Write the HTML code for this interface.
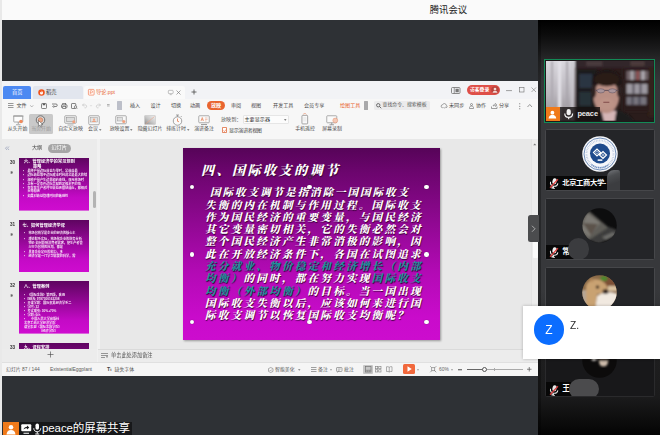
<!DOCTYPE html>
<html lang="zh-CN">
<head>
<meta charset="utf-8">
<title>腾讯会议</title>
<style>
*{box-sizing:border-box;margin:0;padding:0}
html,body{width:660px;height:435px;overflow:hidden;background:#2e3135}
body{position:relative;font-family:"Liberation Sans","Noto Sans CJK SC",sans-serif;color:#333}
.abs{position:absolute}
.t{position:absolute;white-space:nowrap;line-height:1}
svg{position:absolute;overflow:visible}
/* top title bar */
#titlebar{left:0;top:0;width:660px;height:19.5px;background:#fafafa}
#titlebar .t{left:429.7px;top:5.4px;font-size:9.4px;color:#222}
#leftedge{left:0;top:0;width:2px;height:435px;background:#e9e9e9}
/* main dark */
#stage{left:2px;top:20px;width:536px;height:415px;background:#2e3135}
/* wps window: inner uses page coordinates */
#wps{left:2px;top:81px;width:536px;height:295px;background:#f6f6f6;overflow:hidden}
#wpsin{position:absolute;left:-2px;top:-81px;width:660px;height:435px;filter:blur(.35px)}
#tabrow{left:0;top:81px;width:540px;height:18px;background:#f2f3f6}
#menurow{left:0;top:99px;width:540px;height:40px;background:#f7f7f7}
#workarea{left:97px;top:139px;width:443px;height:210px;background:#e8e8e8}
#thumbpane{left:0;top:139px;width:100px;height:223px;background:#ebebeb;border-right:3px solid #f1f1f1}
#notes{left:98px;top:349px;width:442px;height:13px;background:#ececec;border-top:1px solid #dadada}
#status{left:0;top:362px;width:540px;height:14px;background:#f5f5f5;border-top:1px solid #e0e0e0}
.m{position:absolute;white-space:nowrap;line-height:1;font-size:5.1px;color:#4a4a4a;top:103px}
.r{position:absolute;white-space:nowrap;line-height:1;font-size:4.95px;color:#4a4a4a;top:127.4px;text-align:center;transform:translateX(-50%)}
.s{position:absolute;white-space:nowrap;line-height:1;font-size:4.9px;color:#5a5a5a;top:367.6px}
.thumb{position:absolute;left:19.4px;width:69.6px;height:52.6px;background:linear-gradient(#5e0560 0,#8d078f 35%,#c40ac6 75%,#cf0cd0 100%) 0 0/100% 52.6px no-repeat;overflow:hidden}
.thumb b{position:absolute;font-weight:bold;font-size:4.1px;line-height:1;color:#fff;white-space:nowrap;letter-spacing:.15px}
.thumb u{position:absolute;text-decoration:none;font-weight:bold;font-size:3.15px;line-height:1;color:#f7e3f7;white-space:nowrap}
.thumb i{position:absolute;left:6px;height:1.5px;background:#f6dcf6;opacity:.8;border-radius:1px}
.num{position:absolute;left:10px;font-size:4.6px;line-height:1;color:#333;font-weight:bold}
.star{position:absolute;left:9.5px;font-size:4px;line-height:1;color:#666}
/* slide */
#slide{left:183px;top:147.7px;width:257px;height:192.8px;background:linear-gradient(#560458 0,#6b056d 12%,#8f0891 38%,#b30ab5 65%,#c90bcb 88%,#cc0cce 100%);box-shadow:1px 1px 2px rgba(0,0,0,.35)}
#stitle{left:18px;top:12px;font:900 13.2px "Liberation Serif","Noto Serif CJK SC",serif;color:#fff;letter-spacing:2.3px;font-style:italic;text-shadow:.6px .8px 1px rgba(40,0,40,.9)}
#sbody{left:22px;top:39.5px;width:222px;font:900 10.6px/12.32px "Liberation Serif","Noto Serif CJK SC",serif;color:#fff;letter-spacing:2.22px;font-style:italic;text-shadow:.5px .7px .8px rgba(40,0,40,.9);white-space:nowrap;position:absolute}
#sbody span{color:#1f8f9b}
#sbody em{font-style:italic;letter-spacing:1.9px;padding-left:5px}
.hd{position:absolute;margin:-.4px;width:4.4px;height:4.4px;border-radius:50%;background:#fff;box-shadow:0 0 1px rgba(0,0,0,.6)}
/* right panel */
#side{left:538px;top:20px;width:122px;height:415px;background:linear-gradient(#000 0,#0b0b0b 14px,#1a1a1b 28px,#2a2b2c 42px,#353639 62px,#37383b 90px,#37383b 270px,#2c2d2f 310px,#1e1e1f 338px,#1b1b1c 377px,#0d0d0d 400px,#040404 415px)}
#sidestrip{left:538px;top:20px;width:2.500px;height:415px;background:rgba(0,0,0,.28)}
.tile{position:absolute;left:544.700px;width:110.800px;height:62px;background:#242528;border:1px solid #46474a;border-radius:1.500px;overflow:hidden}
.nm{position:absolute;left:0;bottom:0;height:14px;background:rgba(0,0,0,.78);color:#fff;font-size:8.6px;line-height:14px;white-space:nowrap;padding-left:15px}
.blob{position:absolute;background:#555658;border-radius:9px;filter:blur(.6px)}
.av{position:absolute;left:37px;top:8px;width:36px;height:36px;border-radius:50%;overflow:hidden}
</style>
</head>
<body>
<div id="stage" class="abs"></div>
<div id="titlebar" class="abs"><div class="t">腾讯会议</div></div>
<div id="leftedge" class="abs"></div>

<!-- WPS window -->
<div id="wps" class="abs"><div id="wpsin">
  <div id="tabrow" class="abs"></div>
  <div id="menurow" class="abs"></div>

  <!-- tabs -->
  <div class="abs" style="left:3px;top:86px;width:28px;height:12.5px;background:#4c89f2;border-radius:2px 2px 0 0"></div>
  <div class="t" style="left:12px;top:89.6px;font-size:5.2px;color:#fff">首页</div>
  <div class="abs" style="left:32.5px;top:86px;width:50px;height:12.5px;background:#e2e6ee;border-radius:2px 2px 0 0"></div>
  <svg style="left:37.5px;top:88.5px" width="7" height="7" viewBox="0 0 14 14"><circle cx="7" cy="7" r="6.5" fill="#f0541c"/><path d="M7 3c2 2 3 3.5 3 5a3 3 0 0 1-6 0c0-1 .6-1.8 1.4-2.4C5.6 6.600 6.300 7 6.800 6.800 7.600 6 7.400 4.500 7 3z" fill="#fff"/></svg>
  <div class="t" style="left:46px;top:89.6px;font-size:5.2px;color:#333">稻壳</div>
  <div class="abs" style="left:84px;top:86px;width:101px;height:13px;background:#fafafa;border-radius:2px 2px 0 0"></div>
  <svg style="left:88px;top:88.600px" width="6.500" height="6.500" viewBox="0 0 13 13"><rect x=".8" y=".8" width="11.400" height="11.400" rx="1.500" fill="#fffaf7" stroke="#f0683a" stroke-width="1.200"/><path d="M4.500 10V3.500h2.700a2 2 0 0 1 0 4H4.500" fill="none" stroke="#f0683a" stroke-width="1"/></svg>
  <div class="t" style="left:96px;top:89.6px;font-size:5.2px;color:#e8622c">导论.ppt</div>
  <svg style="left:167.500px;top:89.500px" width="5.500" height="5" viewBox="0 0 11 10"><rect x=".7" y=".7" width="9.600" height="6.600" rx="1.500" fill="none" stroke="#999" stroke-width="1.200"/><path d="M3.500 9.300h4" stroke="#999" stroke-width="1.200"/></svg>
  <svg style="left:176px;top:89.500px" width="5" height="5" viewBox="0 0 10 10"><path d="M1 1l8 8M9 1l-8 8" stroke="#777" stroke-width="1.300"/></svg>
  <svg style="left:191px;top:89px" width="6" height="6" viewBox="0 0 12 12"><path d="M6 1v10M1 6h10" stroke="#4a4a4a" stroke-width="1.600"/></svg>

  <!-- window controls -->
  <svg style="left:451px;top:86.500px" width="9.500" height="7" viewBox="0 0 19 14"><rect x="1" y="1" width="17" height="12" rx="2" fill="none" stroke="#6e6e6e" stroke-width="1.600"/><rect x="9" y="3.500" width="6.500" height="7" fill="#777"/><path d="M6.500 1.500v11" stroke="#6e6e6e" stroke-width="1.400"/></svg>
  <div class="abs" style="left:467px;top:85px;width:32.500px;height:10px;border-radius:5px;background:#de4f48"></div>
  <div class="t" style="left:470px;top:87.600px;font-size:4.8px;color:#fff;font-weight:bold">访客登录</div>
  <svg style="left:490.500px;top:86px" width="8" height="8" viewBox="0 0 16 16"><circle cx="8" cy="8" r="7.500" fill="#b8433c"/><circle cx="8" cy="6" r="2.700" fill="#f3d9d6"/><path d="M3 13.500c.5-3 2.500-4.200 5-4.200s4.500 1.200 5 4.200z" fill="#f3d9d6"/></svg>
  <svg style="left:506px;top:90px" width="6" height="1.200" viewBox="0 0 12 2.400"><path d="M0 1.200h12" stroke="#808080" stroke-width="1.500"/></svg>
  <svg style="left:518.500px;top:87.300px" width="5.500" height="5.500" viewBox="0 0 11 11"><rect x="1" y="1" width="9" height="9" fill="none" stroke="#777" stroke-width="1.300"/></svg>
  <svg style="left:530.500px;top:87.300px" width="5.500" height="5.500" viewBox="0 0 11 11"><path d="M1 1l9 9M10 1l-9 9" stroke="#777" stroke-width="1.200"/></svg>

  <!-- menu row -->
  <svg style="left:8px;top:103px" width="5.500" height="5" viewBox="0 0 11 10"><path d="M0 1h11M0 5h11M0 9h11" stroke="#6e6e6e" stroke-width="1.400"/></svg>
  <div class="m" style="left:16.500px">文件</div>
  <svg style="left:29.500px;top:104.500px" width="3.500" height="2.500" viewBox="0 0 7 5"><path d="M.5.500l3 3.500 3-3.500" fill="none" stroke="#888" stroke-width="1.100"/></svg>
  <svg style="left:41px;top:102.500px" width="6" height="6" viewBox="0 0 12 12"><rect x="1" y="1" width="10" height="10" rx="1.500" fill="none" stroke="#5c5c5c" stroke-width="1.500"/><rect x="3.500" y="1" width="5" height="3.500" fill="#5c5c5c"/></svg>
  <svg style="left:51px;top:102.500px" width="6.500" height="6" viewBox="0 0 13 12"><path d="M2 2h8a2.500 2.500 0 0 1 0 5H5M6 4.500L3.500 7 6 9.500M3 11" fill="none" stroke="#5c5c5c" stroke-width="1.500"/></svg>
  <svg style="left:61px;top:102.500px" width="6.500" height="6" viewBox="0 0 13 12"><rect x="1" y="3.500" width="11" height="6" rx="1.200" fill="none" stroke="#5c5c5c" stroke-width="1.500"/><rect x="3.500" y=".8" width="6" height="3" fill="#f7f7f7" stroke="#5c5c5c" stroke-width="1.300"/><rect x="3.500" y="7" width="6" height="4" fill="#f7f7f7" stroke="#5c5c5c" stroke-width="1.300"/></svg>
  <svg style="left:70.500px;top:102.500px" width="6.500" height="6" viewBox="0 0 13 12"><rect x="1" y="1" width="8.500" height="10" rx="1.200" fill="none" stroke="#5c5c5c" stroke-width="1.500"/><circle cx="9" cy="8" r="2.500" fill="#f7f7f7" stroke="#5c5c5c" stroke-width="1.300"/><path d="M11 10l1.500 1.500" stroke="#5c5c5c" stroke-width="1.300"/></svg>
  <svg style="left:82px;top:103px" width="6" height="5" viewBox="0 0 12 10"><path d="M4 1L1 4l3 3M1 4h6.500a3 3 0 0 1 0 5.500H5" fill="none" stroke="#c4c4c4" stroke-width="1.400"/></svg>
  <svg style="left:89.500px;top:105px" width="2" height="1.500" viewBox="0 0 4 3"><path d="M0 0l2 2.500L4 0" fill="none" stroke="#ccc" stroke-width="1"/></svg>
  <svg style="left:94.500px;top:103px" width="6" height="5" viewBox="0 0 12 10"><path d="M8 1l3 3-3 3M11 4H4.500a3 3 0 0 0 0 5.500H7" fill="none" stroke="#c4c4c4" stroke-width="1.400"/></svg>
  <svg style="left:107px;top:104.200px" width="2.600" height="2.600" viewBox="0 0 6 6"><path d="M0 1.200h6M0 4.500h6" stroke="#7a7a7a" stroke-width="1.300"/></svg>
  <div class="abs" style="left:116.800px;top:101px;width:4.800px;height:8.500px;background:#bcbfc9;border-radius:.5px"></div>
  <div class="m" style="left:130px">插入</div>
  <div class="m" style="left:150.500px">设计</div>
  <div class="m" style="left:171px">切换</div>
  <div class="m" style="left:190px">动画</div>
  <div class="abs" style="left:207px;top:100.800px;width:18px;height:9.400px;border-radius:4.700px;background:#e9652f"></div>
  <div class="m" style="left:211px;color:#fff;font-weight:bold">放映</div>
  <div class="m" style="left:231px">审阅</div>
  <div class="m" style="left:251px">视图</div>
  <div class="m" style="left:273px">开发工具</div>
  <div class="m" style="left:304px">会员专享</div>
  <div class="m" style="left:340px;color:#e8622c">绘图工具</div>
  <div class="abs" style="left:363.500px;top:101px;width:4.500px;height:9px;background:#a9a9ab;border-radius:.5px"></div>
  <div class="abs" style="left:373.500px;top:100.800px;width:56px;height:9.400px;background:#ebebec;border-radius:1.500px"></div>
  <svg style="left:376px;top:102.800px" width="5.500" height="5.500" viewBox="0 0 11 11"><circle cx="4.500" cy="4.500" r="3.400" fill="none" stroke="#4a4a4a" stroke-width="1.500"/><path d="M7 7l3.500 3.500" stroke="#4a4a4a" stroke-width="1.600"/></svg>
  <div class="m" style="left:382.500px;font-size:4.900px;color:#555;top:103.100px">查找命令、搜索模板</div>
  <svg style="left:441px;top:102.800px" width="6.500" height="5.500" viewBox="0 0 13 11"><path d="M3.500 9.500a3 3 0 0 1-.3-6 3.800 3.800 0 0 1 7.300 1 2.600 2.600 0 0 1-.5 5" fill="none" stroke="#6e6e6e" stroke-width="1.300"/><path d="M5 8.500l2 2 3-3.500" fill="none" stroke="#6e6e6e" stroke-width="1.200"/></svg>
  <div class="m" style="left:449px">未同步</div>
  <svg style="left:468.500px;top:102.500px" width="5.500" height="6" viewBox="0 0 11 12"><circle cx="5" cy="3" r="2" fill="none" stroke="#6e6e6e" stroke-width="1.300"/><path d="M1 11V9c0-1.800 1.800-3 4-3s4 1.200 4 3v2z" fill="none" stroke="#6e6e6e" stroke-width="1.300"/></svg>
  <div class="m" style="left:476px">协作</div>
  <svg style="left:490.500px;top:102.500px" width="6.500" height="6" viewBox="0 0 13 12"><path d="M1 7v4h11V7" fill="none" stroke="#6e6e6e" stroke-width="1.300"/><path d="M4 6c.5-2.500 2.500-3.500 5-3.500V.8L12 4 9 7V5C7 5 5.500 5 4 6z" fill="none" stroke="#6e6e6e" stroke-width="1.100"/></svg>
  <div class="m" style="left:499px">分享</div>
  <svg style="left:518.500px;top:102.500px" width="1.500" height="6.500" viewBox="0 0 3 13"><circle cx="1.500" cy="1.500" r="1.100" fill="#666"/><circle cx="1.500" cy="6.500" r="1.100" fill="#666"/><circle cx="1.500" cy="11.500" r="1.100" fill="#666"/></svg>
  <svg style="left:526.500px;top:104px" width="5.500" height="3.500" viewBox="0 0 11 7"><path d="M1 6l4.500-5L10 6" fill="none" stroke="#6e6e6e" stroke-width="1.400"/></svg>

  <!-- ribbon -->
  <div class="abs" style="left:29px;top:113.500px;width:23.500px;height:20.500px;background:#c9c9c9;border-radius:1.500px"></div>
  <!-- 1 从头开始 -->
  <svg style="left:12.500px;top:114.500px" width="10.500" height="10.500" viewBox="0 0 21 21"><rect x="1.500" y="2" width="18" height="12" rx="1" fill="#fdfdfd" stroke="#858585" stroke-width="1.400"/><path d="M0 2h21" stroke="#858585" stroke-width="1.500"/><path d="M10.500 14v4M6 19.500h9" stroke="#858585" stroke-width="1.400"/><circle cx="16" cy="13" r="3.600" fill="#f08a5c"/></svg>
  <div class="r" style="left:17.500px">从头开始</div>
  <!-- 2 当页开始 -->
  <svg style="left:35px;top:114.500px" width="11" height="11" viewBox="0 0 22 22"><circle cx="11" cy="10" r="8.500" fill="#d9d9d9" stroke="#5a5a5a" stroke-width="1.600"/><circle cx="11" cy="10" r="4.500" fill="#e9a98c" stroke="#c9724b" stroke-width="1.200"/></svg>
  <svg style="left:38.300px;top:120px" width="5.600" height="8" viewBox="0 0 12 17"><path d="M1 1v12.500l3-2.800 2.200 5 2.200-1-2.200-4.800H10.500z" fill="#fff" stroke="#4a4a4a" stroke-width="1.100" stroke-linejoin="round"/></svg>
  <div class="r" style="left:41px;color:#9a9a9a">当页开始</div>
  <!-- 3 自定义放映 -->
  <svg style="left:64px;top:114.500px" width="13" height="10.500" viewBox="0 0 26 21"><rect x="1.500" y="1.500" width="23" height="15" rx="1.500" fill="#f4f4f4" stroke="#8c8c8c" stroke-width="1.400"/><rect x="5" y="5" width="16" height="8" fill="#dcdcdc" stroke="#888" stroke-width="1"/><path d="M7 20h12" stroke="#8c8c8c" stroke-width="1.400"/><circle cx="19.500" cy="13.500" r="3" fill="#f0a17f"/></svg>
  <div class="r" style="left:70.500px">自定义放映</div>
  <!-- 4 会议 -->
  <svg style="left:88px;top:114.500px" width="12" height="10.500" viewBox="0 0 24 21"><rect x="1.500" y="1.500" width="21" height="18" rx="2" fill="#f8f8f8" stroke="#8c8c8c" stroke-width="1.400"/><rect x="5" y="5" width="14" height="9" fill="#e2e2e2" stroke="#999" stroke-width="1"/><circle cx="12" cy="9" r="2" fill="#f0a17f"/><path d="M8 14c.5-2 2-3 4-3s3.500 1 4 3z" fill="#f0a17f"/></svg>
  <div class="r" style="left:93px">会议</div>
  <svg style="left:99px;top:128.900px" width="2.500" height="2" viewBox="0 0 5 4"><path d="M0 .5h5L2.500 3.500z" fill="#666"/></svg>
  <!-- 5 放映设置 -->
  <svg style="left:115px;top:114.500px" width="12" height="10.500" viewBox="0 0 24 21"><rect x="1.500" y="1.500" width="21" height="16" rx="1.500" fill="#f8f8f8" stroke="#8c8c8c" stroke-width="1.400"/><rect x="5" y="5" width="10" height="7" fill="#e0e0e0" stroke="#999" stroke-width="1"/><circle cx="17.500" cy="13" r="3.200" fill="#f0a17f"/></svg>
  <div class="r" style="left:119.500px">放映设置</div>
  <svg style="left:130px;top:128.900px" width="2.500" height="2" viewBox="0 0 5 4"><path d="M0 .5h5L2.500 3.500z" fill="#666"/></svg>
  <!-- 6 隐藏幻灯片 -->
  <svg style="left:144px;top:114.500px" width="12" height="10.500" viewBox="0 0 24 21"><defs><linearGradient id="hg" x1="0" y1="1" x2="1" y2="0"><stop offset="0" stop-color="#8f8f8f"/><stop offset=".5" stop-color="#c9c9c9"/><stop offset="1" stop-color="#f0f0f0"/></linearGradient></defs><rect x="1.500" y="1.500" width="21" height="17" fill="url(#hg)" stroke="#b8b8b8" stroke-width="1"/><path d="M3 18L21 3" stroke="#e8a98e" stroke-width="1.300"/></svg>
  <div class="r" style="left:150px">隐藏幻灯片</div>
  <!-- 7 排练计时 -->
  <svg style="left:171.500px;top:113.500px" width="11" height="12" viewBox="0 0 22 24"><circle cx="11" cy="14" r="8.500" fill="#fafafa" stroke="#858585" stroke-width="1.500"/><path d="M8 2h6M11 2v3.500M17.500 6l1.800-1.800" stroke="#858585" stroke-width="1.500"/><path d="M11 9v5.500l3 1" fill="none" stroke="#e77a4d" stroke-width="1.600"/></svg>
  <div class="r" style="left:176px">排练计时</div>
  <svg style="left:186.500px;top:128.900px" width="2.500" height="2" viewBox="0 0 5 4"><path d="M0 .5h5L2.500 3.500z" fill="#666"/></svg>
  <!-- 8 演讲备注 -->
  <svg style="left:198px;top:115px" width="12" height="10" viewBox="0 0 24 20"><rect x="1.500" y="1.500" width="21" height="14" rx="1.500" fill="#fafafa" stroke="#8c8c8c" stroke-width="1.400"/><path d="M6 19h12" stroke="#808080" stroke-width="1.500"/><path d="M6 12l2.500-7L11 12M7 9.500h3" fill="none" stroke="#e77a4d" stroke-width="1.300"/><path d="M14 6h5M14 9h5M14 12h3" stroke="#e9a58b" stroke-width="1.200"/></svg>
  <div class="r" style="left:204px">演讲备注</div>
  <!-- 9 放映到 -->
  <div class="t" style="left:221px;top:116.800px;font-size:5.100px;color:#555">放映到：</div>
  <div class="abs" style="left:242.500px;top:114.500px;width:46px;height:9.500px;background:#fcfcfc;border:.5px solid #e6e6e6;border-radius:1px"></div>
  <div class="t" style="left:244.500px;top:116.800px;font-size:5.100px;color:#333">主要显示器</div>
  <svg style="left:283.500px;top:118.500px" width="2.500" height="2" viewBox="0 0 5 4"><path d="M0 .5h5L2.500 3.500z" fill="#555"/></svg>
  <div class="abs" style="left:221.500px;top:127.300px;width:5.500px;height:5.500px;background:#fff;border:.7px solid #e58a66;border-radius:.8px"></div>
  <svg style="left:222.500px;top:128.500px" width="3.600" height="3" viewBox="0 0 7 6"><path d="M.8 3l2 2.200L6.300.8" fill="none" stroke="#e0673a" stroke-width="1.200"/></svg>
  <div class="t" style="left:229px;top:127.600px;font-size:5.100px;color:#444;letter-spacing:-.45px">显示演讲者视图</div>
  <!-- 11 手机遥控 -->
  <svg style="left:301.200px;top:113px" width="7.600" height="11.400" viewBox="0 0 16 24"><rect x="2" y="5" width="12" height="18" rx="1.500" fill="#fafafa" stroke="#858585" stroke-width="1.500"/><path d="M4.500 3c1-1.400 2.200-2 3.500-2s2.500.6 3.500 2" fill="none" stroke="#e9906b" stroke-width="1.400"/><rect x="4.500" y="8" width="7" height="10" fill="#eee"/></svg>
  <div class="r" style="left:305px">手机遥控</div>
  <!-- 12 屏幕录制 -->
  <svg style="left:326px;top:114.500px" width="12.500" height="10.500" viewBox="0 0 25 21"><rect x="1.500" y="1.500" width="20" height="14" rx="1.500" fill="#fafafa" stroke="#8c8c8c" stroke-width="1.400"/><path d="M7 19.500h9M11.500 15.500v4" stroke="#808080" stroke-width="1.500"/><circle cx="18.500" cy="11" r="4.800" fill="#f3c9b6" stroke="#e58f6d" stroke-width="1"/></svg>
  <div class="r" style="left:332px">屏幕录制</div>

  <!-- work area -->
  <div id="workarea" class="abs"></div>
  <div id="thumbpane" class="abs"></div>
  <svg style="left:4.500px;top:145.500px" width="4.500" height="4.500" viewBox="0 0 9 9"><path d="M4 1L1 4.500 4 8M8 1L5 4.500 8 8" fill="none" stroke="#7a86a8" stroke-width="1.100"/></svg>
  <div class="t" style="left:32px;top:145.400px;font-size:5.100px;color:#444">大纲</div>
  <div class="abs" style="left:48px;top:143.500px;width:22.500px;height:9px;border-radius:4.500px;background:#a6a6a6"></div>
  <div class="t" style="left:51.500px;top:145.400px;font-size:5.100px;color:#fff">幻灯片</div>

  <div class="num" style="top:161px">30</div><div class="star" style="top:171px">✱</div>
  <div class="thumb" style="top:158.4px;left:19.4px"><b style="left:4.6px;top:1.2px">六、管理经济学的常见规则</b><b style="left:13.6px;top:6.6px">策略</b><u style="left:3.6px;top:11.3px">•</u><u style="left:8.0px;top:11.3px">最终产量边际收益为零时，总收益最</u><u style="left:3.6px;top:15.7px">•</u><u style="left:8.0px;top:15.7px">边际收益等于边际成本时利润总是最大的结</u><u style="left:3.6px;top:20.2px">•</u><u style="left:8.0px;top:20.2px">规模产量产生边界和约束线，双元市场时</u><u style="left:3.6px;top:24.4px">•</u><u style="left:8.0px;top:24.4px">总有一定条件边际贡献到足够水平的情</u><u style="left:3.6px;top:28.8px">•</u><u style="left:8.0px;top:28.8px">在存在生产者时行收益无限制逼近，那相对</u><u style="left:8.0px;top:31.9px">分布较无</u><u style="left:3.6px;top:36.8px">•</u><u style="left:8.0px;top:36.8px">如果对收益管理时间的敏感性</u></div>
  <div class="num" style="top:222.500px">31</div><div class="star" style="top:232.500px">✱</div>
  <div class="thumb" style="top:219.8px;left:19.4px"><b style="left:3.2px;top:3.8px">七、如何管理经济学课</b><u style="left:4.6px;top:12.6px">•</u><u style="left:9.0px;top:12.6px">市场营销学是企业的经济的核心主</u><u style="left:4.6px;top:18.4px">•</u><u style="left:9.0px;top:18.4px">理论联系实际，市场化企业的财务分析</u><u style="left:9.0px;top:22.3px">物价 如何影响消费者需求，使生产者管</u><u style="left:9.0px;top:26.3px">以行为营销的应用。都是</u><u style="left:4.6px;top:31.1px">•</u><u style="left:9.0px;top:31.1px">具备企业定价的能力。多</u><u style="left:4.6px;top:35.6px">•</u><u style="left:9.0px;top:35.6px">经济学是一门学习需要的科学。需</u></div>
  <div class="num" style="top:284px">32</div><div class="star" style="top:294px">✱</div>
  <div class="thumb" style="top:281.2px;left:19.4px"><b style="left:4.6px;top:4px">八、管理案例</b><u style="left:4.6px;top:12.9px">•</u><u style="left:8.0px;top:12.9px">《国际金融》第四版，陈雨</u><u style="left:4.6px;top:17.0px">•</u><u style="left:8.0px;top:17.0px">ISBN: 9787300163208</u><u style="left:4.6px;top:20.9px">•</u><u style="left:8.0px;top:20.9px">开课学期：国际贸易经济学系二</u><u style="left:4.6px;top:24.9px">•</u><u style="left:8.0px;top:24.9px">学时: 32</u><u style="left:4.6px;top:28.7px">•</u><u style="left:8.0px;top:28.7px">考试成绩: 30%+70%</u><u style="left:4.6px;top:32.9px">•</u><u style="left:8.0px;top:32.9px">学期: 6th</u><u style="left:4.6px;top:37.0px">•</u><u style="left:11.6px;top:37.0px">中国人民大学出版社</u><u style="left:4.6px;top:41.2px">北京工商大学经济学院</u><u style="left:4.6px;top:45.0px">课堂表现（国际金融学院）</u><u style="left:19.6px;top:48.7px">（经济学院）</u></div>
  <div class="num" style="top:346.200px">33</div>
  <div class="thumb" style="top:342.6px;left:19.4px;height:6.4px"><b style="left:4.6px;top:3.6px">九、课程安排</b></div>
  <div class="abs" style="left:92.500px;top:191px;width:3px;height:17px;border-radius:1.500px;background:#b3b3b3"></div>
  <div class="abs" style="left:0;top:349px;width:97px;height:13px;background:#ececec"></div>
  <svg style="left:46.500px;top:351px" width="7" height="7" viewBox="0 0 14 14"><path d="M7 1v12M1 7h12" stroke="#444" stroke-width="1.200"/></svg>

  <!-- slide -->
  <div id="slide" class="abs">
    <div id="stitle" class="t">四、国际收支的调节</div>
    <div id="sbody"><em>国际收支调节是指消除一国国际收支</em><br>失衡的内在机制与作用过程。国际收支<br>作为国民经济的重要变量，与国民经济<br>其它变量密切相关，它的失衡必然会对<br>整个国民经济产生非常消极的影响，因<br>此在开放经济条件下，各国在试图追求<br><span>充分就业、物价稳定和经济增长（内部</span><br><span>均衡）</span>的同时，都在努力实现<span>国际收支</span><br><span>均衡（外部均衡）</span>的目标。当一国出现<br>国际收支失衡以后，应该如何来进行国<br>际收支调节以恢复国际收支均衡呢？</div>
    <div class="hd" style="left:7px;top:37.500px"></div><div class="hd" style="left:124.500px;top:37.500px"></div><div class="hd" style="left:241.500px;top:37.500px"></div>
    <div class="hd" style="left:7px;top:105px"></div><div class="hd" style="left:241.500px;top:105px"></div>
    <div class="hd" style="left:7px;top:172.500px"></div><div class="hd" style="left:124.500px;top:172.500px"></div><div class="hd" style="left:241.500px;top:172.500px"></div>
    <svg style="left:124px;top:26.500px" width="6" height="6" viewBox="0 0 12 12"><circle cx="6" cy="6" r="4" fill="none" stroke="#3a2a3a" stroke-width="1.600"/><path d="M8 2l2.500-1v3" fill="none" stroke="#3a2a3a" stroke-width="1.200"/></svg>
  </div>

  <!-- right scrollbar -->
  <div class="abs" style="left:531px;top:139px;width:7px;height:210px;background:#ececec;border-left:1px solid #e3e3e3"></div>
  <svg style="left:532.500px;top:142.500px" width="3.500" height="2.500" viewBox="0 0 7 5"><path d="M.5 4.500L3.500.8l3 3.700z" fill="#777"/></svg>
  <div class="abs" style="left:533px;top:226px;width:4.500px;height:32px;background:#fbfbfb;border-radius:1px"></div>

  <!-- notes -->
  <div id="notes" class="abs"></div>
  <svg style="left:101px;top:352.500px" width="7" height="5.500" viewBox="0 0 14 11"><path d="M0 1h14M0 5h14M0 9h8" stroke="#666" stroke-width="1.300"/><path d="M10 7.500h4M12 9.500v-4" stroke="#666" stroke-width="1"/></svg>
  <div class="t" style="left:111px;top:352.800px;font-size:5.200px;color:#555">单击此处添加备注</div>

  <!-- status -->
  <div id="status" class="abs"></div>
  <div class="s" style="left:6px">幻灯片 87 / 144</div>
  <div class="s" style="left:50px;font-size:4.950px">ExistentialEggplant</div>
  <div class="s" style="left:107px;font-weight:bold;font-size:5.200px;top:366.800px;color:#444">T<span style="font-size:3.800px">t</span></div>
  <div class="s" style="left:114.500px">缺失字体</div>
  <svg style="left:267.500px;top:366.500px" width="5.500" height="6" viewBox="0 0 11 12"><path d="M5.500 1L10 3.200v5.600L5.500 11 1 8.800V3.200z" fill="none" stroke="#707070" stroke-width="1.100"/><path d="M3.500 6.500L5 8l2.500-3" fill="none" stroke="#707070" stroke-width="1"/></svg>
  <div class="s" style="left:275px">智能美化</div>
  <svg style="left:298px;top:369px" width="2.500" height="2" viewBox="0 0 5 4"><path d="M0 .5h5L2.500 3.500z" fill="#777"/></svg>
  <svg style="left:311px;top:367px" width="5.500" height="5" viewBox="0 0 11 10"><path d="M0 1h11M0 5h11M0 9h11" stroke="#707070" stroke-width="1.300"/></svg>
  <div class="s" style="left:318px">备注</div>
  <svg style="left:330px;top:369px" width="2" height="2" viewBox="0 0 4 4"><path d="M0 .5h4L2 3.500z" fill="#888"/></svg>
  <svg style="left:336px;top:366.500px" width="6.500" height="6" viewBox="0 0 13 12"><rect x="1" y="1" width="11" height="8" rx="1.200" fill="none" stroke="#707070" stroke-width="1.200"/><path d="M3 11l2-2" stroke="#707070" stroke-width="1.200"/><path d="M3.500 4h6M3.500 6.500h4" stroke="#707070" stroke-width="1"/></svg>
  <div class="s" style="left:344px">批注</div>
  <div class="abs" style="left:363px;top:364.500px;width:9.500px;height:9.500px;background:#c6c6c6;border-radius:1px"></div>
  <svg style="left:364.500px;top:366px" width="6.500" height="6.500" viewBox="0 0 13 13"><rect x="1" y="1" width="11" height="11" fill="none" stroke="#707070" stroke-width="1.300"/><path d="M1 8.500h11M4.500 8.500v3.500M8.500 8.500v3.500" stroke="#707070" stroke-width="1.100"/></svg>
  <svg style="left:375px;top:366px" width="6.500" height="6.500" viewBox="0 0 13 13"><rect x="1" y="1" width="4.500" height="4.500" fill="none" stroke="#7c7c7c" stroke-width="1.200"/><rect x="7.500" y="1" width="4.500" height="4.500" fill="none" stroke="#7c7c7c" stroke-width="1.200"/><rect x="1" y="7.500" width="4.500" height="4.500" fill="none" stroke="#7c7c7c" stroke-width="1.200"/><rect x="7.500" y="7.500" width="4.500" height="4.500" fill="none" stroke="#7c7c7c" stroke-width="1.200"/></svg>
  <svg style="left:385.500px;top:366px" width="6.500" height="6.500" viewBox="0 0 13 13"><path d="M6.500 2.500C5 1.300 3 1 1 1.500v9.500c2-.5 4-.2 5.500 1 1.500-1.200 3.500-1.500 5.500-1V1.500c-2-.5-4-.2-5.500 1zM6.500 2.500V12" fill="none" stroke="#7c7c7c" stroke-width="1.200"/></svg>
  <div class="abs" style="left:402.500px;top:364px;width:12.500px;height:10px;background:#f1683c;border-radius:1.500px"></div>
  <svg style="left:406.500px;top:366px" width="5" height="6" viewBox="0 0 10 12"><path d="M1 .5l8.500 5.500L1 11.500z" fill="#fff"/></svg>
  <svg style="left:417px;top:369px" width="2" height="2" viewBox="0 0 4 4"><path d="M0 .5h4L2 3.500z" fill="#888"/></svg>
  <svg style="left:429.500px;top:366px" width="6.500" height="6.500" viewBox="0 0 13 13"><rect x="3.500" y="3.500" width="6" height="6" fill="none" stroke="#707070" stroke-width="1.200"/><path d="M.5.500l3 3M12.500.500l-3 3M.5 12.500l3-3M12.500 12.500l-3-3" stroke="#707070" stroke-width="1.300"/></svg>
  <div class="s" style="left:439px;color:#666">60%</div>
  <svg style="left:451px;top:369px" width="2" height="2" viewBox="0 0 4 4"><path d="M0 .5h4L2 3.500z" fill="#888"/></svg>
  <svg style="left:458px;top:368.500px" width="4" height="1.500" viewBox="0 0 8 3"><path d="M0 1.500h8" stroke="#5a5a5a" stroke-width="2.200"/></svg>
  <div class="abs" style="left:467px;top:368.900px;width:55.500px;height:.8px;background:#aaa"></div>
  <div class="abs" style="left:467px;top:368.800px;width:17px;height:1px;background:#666"></div>
  <div class="abs" style="left:494px;top:367.800px;width:.7px;height:3px;background:#aaa"></div>
  <div class="abs" style="left:481.800px;top:366.800px;width:5px;height:5px;border-radius:50%;background:#fafafa;border:.9px solid #555"></div>
  <svg style="left:527px;top:367px" width="4.500" height="4.500" viewBox="0 0 9 9"><path d="M4.500 0v9M0 4.500h9" stroke="#5a5a5a" stroke-width="1.500"/></svg>
</div></div>

<!-- right side panel -->
<div id="side" class="abs"></div><div id="sidestrip" class="abs"></div>

<!-- tile 1 : video -->
<div class="tile" style="top:59.400px;left:544.100px;width:111.200px;border-color:#138a56;border-radius:0;background:#1d1a1b;height:63.400px">
  <svg style="left:.8px;top:.8px" width="107.600" height="59.700" viewBox="0 0 107 60" preserveAspectRatio="none">
    <defs>
      <filter id="b1" x="-10%" y="-10%" width="120%" height="120%"><feGaussianBlur stdDeviation="1.250"/></filter>
      <filter id="b2" x="-10%" y="-10%" width="120%" height="120%"><feGaussianBlur stdDeviation=".75"/></filter>
      <linearGradient id="cur" x1="0" y1="0" x2="0" y2="1"><stop offset="0" stop-color="#dcdae0"/><stop offset=".55" stop-color="#bab6bd"/><stop offset="1" stop-color="#8d888c"/></linearGradient>
      <clipPath id="vc"><rect x="0" y="0" width="107" height="60"/></clipPath>
    </defs>
    <g clip-path="url(#vc)">
    <rect width="107" height="60" fill="#2a1c1b"/>
    <g filter="url(#b1)">
      <rect x="28" y="-2" width="82" height="9" fill="#33252a"/>
      <rect x="40" y="0" width="16" height="5" fill="#4a3a3c"/><rect x="84" y="0" width="14" height="5" fill="#4c3b3a"/>
      <rect x="30" y="8" width="20" height="42" fill="#1d1a1f"/>
      <rect x="33" y="13" width="13" height="14" fill="#2c3542"/>
      <rect x="33" y="31" width="12" height="14" fill="#283039"/>
      <rect x="76" y="7" width="30" height="44" fill="#2c1c1b"/>
      <rect x="80" y="10" width="22" height="9" fill="#6f6468"/>
      <rect x="84" y="10" width="3" height="9" fill="#a9a4aa"/><rect x="90" y="10" width="2.500" height="9" fill="#8f4a48"/><rect x="95" y="10" width="3" height="9" fill="#b0acb2"/>
      <rect x="80" y="23" width="21" height="10" fill="#9c99a1"/>
      <rect x="86" y="23" width="2" height="10" fill="#5a5560"/><rect x="93" y="23" width="2" height="10" fill="#5a5560"/>
      <rect x="80" y="36" width="20" height="8" fill="#77747e"/>
      <rect x="85" y="36" width="2" height="8" fill="#4a4652"/><rect x="92" y="36" width="2" height="8" fill="#4a4652"/>
      <rect x="102" y="6" width="8" height="50" fill="#33201f"/>
      <rect x="-2" y="-2" width="31" height="64" fill="url(#cur)"/>
      <rect x="5" y="0" width="2" height="60" fill="#aaa6ae"/><rect x="12" y="0" width="3" height="60" fill="#e4e2e8"/><rect x="20" y="0" width="2" height="60" fill="#a6a2a9"/><rect x="25" y="0" width="2" height="60" fill="#c9c6cc"/>
      <path d="M42 62c1-9 6-14 18-14s24 4 28 14z" fill="#1b1a1f"/>
      <path d="M55 50l3 12h10l2-12z" fill="#d4b5b6"/>
      <ellipse cx="60.500" cy="21.500" rx="15" ry="13" fill="#1f1516"/>
      <ellipse cx="60" cy="36" rx="12.800" ry="16.500" fill="#b98f84"/>
      <ellipse cx="60.500" cy="18.500" rx="12.500" ry="7" fill="#2a1b19"/>
      <ellipse cx="47.500" cy="30" rx="2.500" ry="7" fill="#2e2120"/><ellipse cx="73" cy="30" rx="2.500" ry="7" fill="#2e2120"/>
      <ellipse cx="60" cy="43" rx="8" ry="6" fill="#bd9387"/>
    </g>
    <g filter="url(#b2)">
      <path d="M49 29.500h23" stroke="#5f4f58" stroke-width="1"/>
      <ellipse cx="54.500" cy="30" rx="3.800" ry="2.100" fill="#a8949a" stroke="#5c4f5c" stroke-width=".5"/>
      <ellipse cx="66" cy="30" rx="3.800" ry="2.100" fill="#a8949a" stroke="#5c4f5c" stroke-width=".5"/>
      <path d="M57 41.500h6" stroke="#86504f" stroke-width="1.100"/>
      
    </g>
    </g>
  </svg>
  <div class="abs" style="left:.6px;top:46.400px;width:14.400px;height:13.900px;background:#f07a1a"></div>
  <svg style="left:3.300px;top:49.800px" width="8.800" height="9" viewBox="0 0 19 20"><circle cx="9.500" cy="6" r="4.200" fill="#fff"/><path d="M1 19c.6-6 4-8.500 8.500-8.500S17.400 13 18 19z" fill="#fff"/></svg>
  <div class="abs" style="left:15px;top:46.400px;width:40px;height:13.900px;background:rgba(22,18,18,.8)"></div>
  <svg style="left:19.300px;top:48.200px" width="9.400" height="10.500" viewBox="0 0 18 20"><rect x="5" y="0" width="8" height="12" rx="4" fill="#f2f2f2"/><path d="M1.500 8.500c0 5 3.200 7.500 7.500 7.500s7.500-2.500 7.500-7.500M9 16v3.500" fill="none" stroke="#f2f2f2" stroke-width="2.300"/></svg>
  <div class="t" style="left:32.300px;top:49.400px;font-size:7.500px;color:#e8e8e8;font-weight:bold;letter-spacing:-.15px">peace</div>
</div>

<!-- tile 2 -->
<div class="tile" style="top:128.500px;height:62px">
  <svg style="left:36px;top:6.500px" width="36" height="36" viewBox="0 0 72 72">
    <circle cx="36" cy="36" r="35.500" fill="#f6f7fa"/>
    <circle cx="36" cy="36" r="32" fill="none" stroke="#2a5594" stroke-width="1.300"/>
    <circle cx="36" cy="36" r="27" fill="none" stroke="#b4c3dc" stroke-width="3.600" stroke-dasharray="1.200 2"/>
    <circle cx="36" cy="35" r="20" fill="#1f4b8c"/>
    <path d="M23 33l7-7 7 7-7 7zM35 38l7-7 7 7-7 7z" fill="none" stroke="#fff" stroke-width="2.400"/>
    <path d="M27.500 33l2.500-2.500 2.500 2.500-2.500 2.500zM39.500 38l2.500-2.500 2.500 2.500-2.500 2.500z" fill="none" stroke="#fff" stroke-width="1.400"/>
    <rect x="31" y="46.500" width="10" height="3.500" rx="1.500" fill="#dfe7f3"/>
    <path d="M19 57c5 4.500 11 6.500 17 6.500s12-2 17-6.500" fill="none" stroke="#6f8fc0" stroke-width="3" stroke-dasharray="2.400 1.200"/>
  </svg>
  <div class="nm" style="width:61.500px;padding-left:16.500px;font-size:7.300px;font-weight:bold;letter-spacing:-.35px">北京工商大学-</div>
  <svg class="mic" style="left:3.500px;top:48px" width="10" height="11" viewBox="0 0 20 22"><g transform="rotate(12 10 11)"><rect x="6" y=".5" width="8" height="12" rx="4" fill="#f2f2f2"/><path d="M2.500 9c0 5 3.200 7.500 7.500 7.500s7.500-2.500 7.500-7.500M10 16.500v4M6.500 20.500h7" fill="none" stroke="#f2f2f2" stroke-width="2"/></g><path d="M2 19.500L18 2.500" stroke="#e23b3b" stroke-width="2.200"/></svg>
  <div class="blob" style="left:61.500px;top:40.500px;width:12.500px;height:22px;border-radius:7px 2px 0 0;background:linear-gradient(160deg,#76787c 0,#4b4d50 28%,#3c3d40 60%)"></div>
</div>

<!-- tile 3 -->
<div class="tile" style="top:197.500px;height:62px">
  <svg style="left:36.500px;top:9px" width="35" height="35" viewBox="0 0 70 70">
    <defs><clipPath id="c3"><circle cx="35" cy="35" r="34.500"/></clipPath><filter id="b3"><feGaussianBlur stdDeviation="1.800"/></filter></defs>
    <g clip-path="url(#c3)"><rect width="70" height="70" fill="#0d0d0e"/>
      <g filter="url(#b3)"><path d="M-2 22L14 6l40 34-42 26-16-8z" fill="#5f5d58"/><path d="M10 10l26 20-22 28-16-14z" fill="#7d7a74"/><path d="M14 64l40-26 16 6v10L34 72z" fill="#3c3c3c"/><path d="M40 58l22-10 6 6-20 10z" fill="#6a6a68"/><path d="M2 30l30 2-14 22z" fill="#5c534c"/></g></g>
  </svg>
  <div class="nm" style="width:28px;padding-left:16.500px;font-size:7.700px;font-weight:bold">常</div>
  <svg class="mic" style="left:3.500px;top:48.500px" width="10" height="11" viewBox="0 0 20 22"><g transform="rotate(12 10 11)"><rect x="6" y=".5" width="8" height="12" rx="4" fill="#f2f2f2"/><path d="M2.500 9c0 5 3.200 7.500 7.500 7.500s7.500-2.500 7.500-7.500M10 16.500v4M6.500 20.500h7" fill="none" stroke="#f2f2f2" stroke-width="2"/></g><path d="M2 19.500L18 2.500" stroke="#e23b3b" stroke-width="2.200"/></svg>
  <div class="blob" style="left:22px;top:39.500px;width:21.500px;height:21.500px;border-radius:50%;background:#3b3c3f"></div>
</div>

<!-- tile 4 -->
<div class="tile" style="top:266.500px;height:62px">
  <svg style="left:36.500px;top:7px" width="35" height="35" viewBox="0 0 70 70">
    <defs><clipPath id="c4"><circle cx="35" cy="35" r="34.500"/></clipPath><filter id="b4"><feGaussianBlur stdDeviation="1.700"/></filter></defs>
    <g clip-path="url(#c4)"><rect width="70" height="70" fill="#8a6a48"/>
      <g filter="url(#b4)"><rect x="40" y="0" width="32" height="34" fill="#7b4f34"/><rect x="-2" y="30" width="24" height="42" fill="#b4a596"/>
      <path d="M8 22c4-12 16-16 28-12 8 3 14 10 16 18l-8 8-14 2-4 34H8z" fill="#c9a272"/><path d="M14 14l4-10 6 9z" fill="#b58a5c"/>
      <path d="M30 42c10-8 26-10 42-4v34H26z" fill="#f1e9e0"/><ellipse cx="47" cy="33" rx="6" ry="5" fill="#3b2b22"/><ellipse cx="31" cy="24" rx="3.500" ry="3" fill="#2a1d16"/>
      <ellipse cx="44" cy="7" rx="7" ry="5" fill="#4c8a2e"/><rect x="52" y="22" width="20" height="10" fill="#d9c2a0"/></g></g>
  </svg>
</div>

<!-- tile 5 -->
<div class="tile" style="top:335px;height:62px;background:#18181a;border-color:#2a2a2c">
  <svg style="left:36.500px;top:7px" width="35" height="35" viewBox="0 0 70 70">
    <defs><clipPath id="c5"><circle cx="35" cy="35" r="34.500"/></clipPath><filter id="b5"><feGaussianBlur stdDeviation="1.600"/></filter></defs>
    <g clip-path="url(#c5)"><rect width="70" height="70" fill="#0c0b0b"/>
      <g filter="url(#b5)"><ellipse cx="43" cy="38" rx="9" ry="9" fill="#cdbcab"/><path d="M30 30c6-6 20-6 26 2l-4 4H34z" fill="#1a1412"/><path d="M18 32l8-2 4 4-8 2z" fill="#e9e4de"/></g></g>
  </svg>
  <div class="nm" style="width:25px;padding-left:16.500px;font-size:7.700px;font-weight:bold;background:rgba(0,0,0,.7)">王</div>
  <svg class="mic" style="left:3.500px;top:48.500px" width="10" height="11" viewBox="0 0 20 22"><g transform="rotate(12 10 11)"><rect x="6" y=".5" width="8" height="12" rx="4" fill="#e6e6e6"/><path d="M2.500 9c0 5 3.200 7.500 7.500 7.500s7.500-2.500 7.500-7.500M10 16.500v4M6.500 20.500h7" fill="none" stroke="#e6e6e6" stroke-width="2"/></g><path d="M2 19.500L18 2.500" stroke="#d83a3a" stroke-width="2.200"/></svg>
  <div class="blob" style="left:23px;top:42.500px;width:30.500px;height:20px;border-radius:10px;background:#4b4b4d"></div>
</div>

<!-- collapse tab -->
<div class="abs" style="left:528px;top:215px;width:10.500px;height:27px;background:#4b4c4e;border-radius:2.500px 0 0 2.500px"></div>
<svg style="left:530.500px;top:225px" width="5" height="7.500" viewBox="0 0 10 15"><path d="M2 1.500l6 6-6 6" fill="none" stroke="#b9b9b9" stroke-width="1.700"/></svg>

<!-- popup -->
<div class="abs" style="left:523px;top:306px;width:137px;height:52.500px;background:#fff;box-shadow:0 0 3px rgba(0,0,0,.25)"></div>
<div class="abs" style="left:533.700px;top:314.300px;width:30.600px;height:30.600px;border-radius:50%;background:#0b6dff"></div>
<div class="t" style="left:545.300px;top:324.200px;font-size:12px;color:#fff">Z</div>
<div class="t" style="left:570px;top:321.100px;font-size:10.200px;color:#2b2b2b">Z.</div>

<!-- bottom-left share label -->
<div class="abs" style="left:3px;top:421.500px;width:16px;height:13.500px;background:#f07a1a"></div>
<svg style="left:6px;top:423.500px" width="10" height="11" viewBox="0 0 20 22"><circle cx="10" cy="6.500" r="4.500" fill="#fff"/><path d="M1 21c.6-6.500 4.200-9 9-9s8.400 2.500 9 9z" fill="#fff"/></svg>
<div class="abs" style="left:19px;top:421.500px;width:112.500px;height:13.500px;background:#17181a"></div>
<svg style="left:20.500px;top:424px" width="10.500" height="9.500" viewBox="0 0 21 19"><rect x=".5" y=".5" width="20" height="14" rx="2" fill="#fff"/><path d="M5 18.500h11" stroke="#fff" stroke-width="2"/><path d="M5 11c1-4 4-5.500 7-5.500V3l4.500 4-4.500 4V8.500c-3 0-5 .5-7 2.500z" fill="#17181a"/></svg>
<svg style="left:32.500px;top:423px" width="8.500" height="11.500" viewBox="0 0 17 23"><rect x="5" y="1" width="7" height="12.500" rx="3.500" fill="#fff"/><path d="M1.500 10.500c0 4.500 3 7 7 7s7-2.500 7-7M8.500 17.500v4M4.500 22h8" fill="none" stroke="#fff" stroke-width="1.900"/></svg>
<div class="t" style="left:42px;top:423.200px;font-size:11.500px;color:#fff;letter-spacing:-.1px">peace的屏幕共享</div>
</body>
</html>
